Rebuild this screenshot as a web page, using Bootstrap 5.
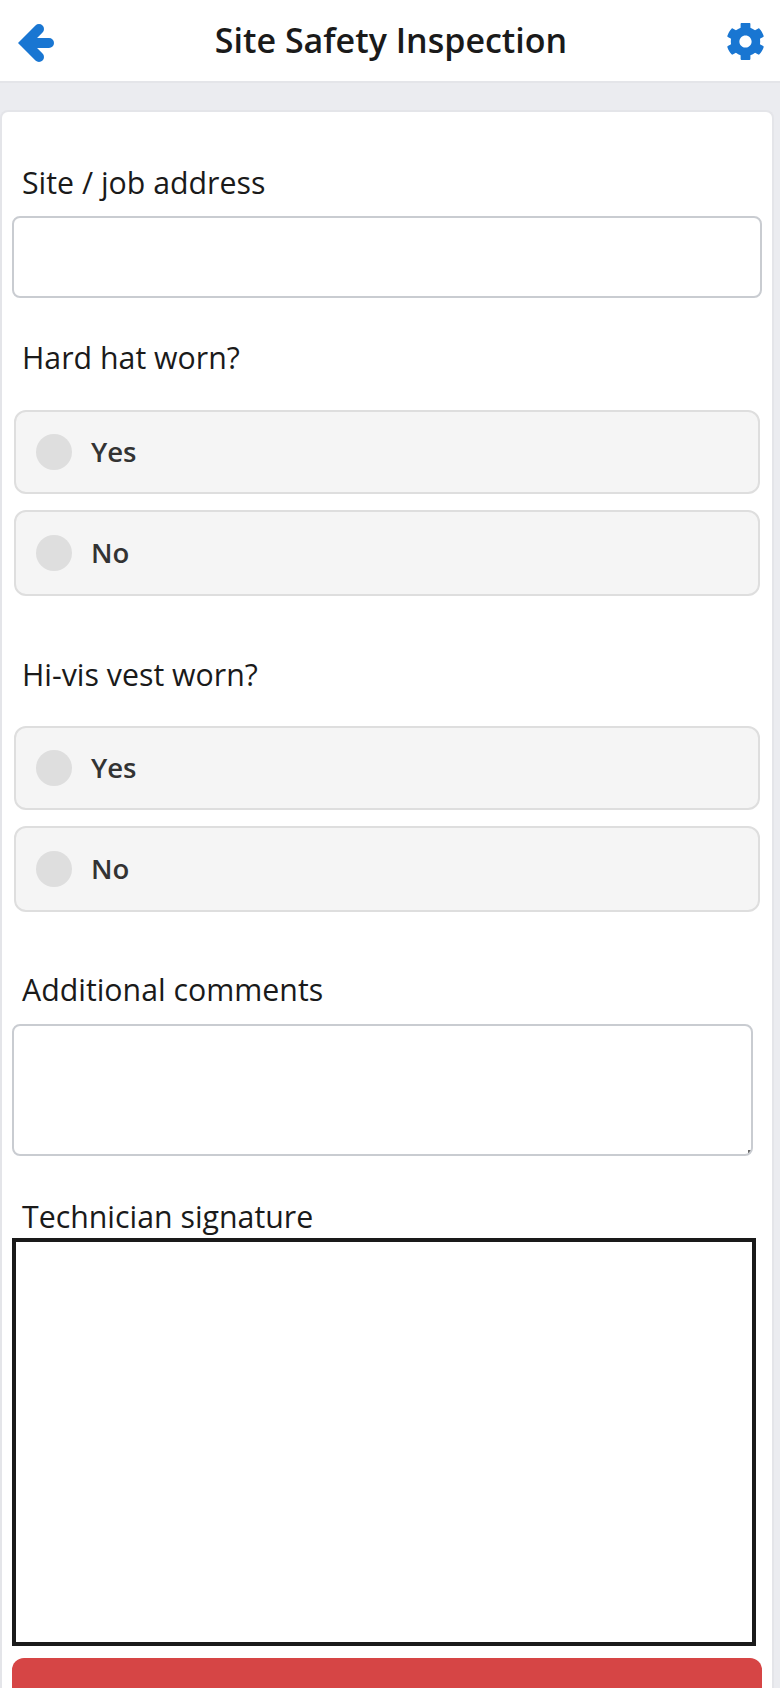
<!DOCTYPE html>
<html lang="en">
<head>
<meta charset="utf-8">
<title>Site Safety Inspection</title>
<link rel="stylesheet" href="https://cdn.jsdelivr.net/npm/bootstrap@5.3.0/dist/css/bootstrap.min.css">
<style>
html,body{height:1688px;overflow:hidden;}
body{background:#ebecf0;font-family:"Open Sans","Noto Sans",sans-serif;color:#1a1a1a;}
.app-head{height:83px;background:#fff;border-bottom:2px solid #e4e5e9;padding:0 16px 0 18px;}
.app-title{font-size:34px;font-weight:600;line-height:1.2;margin:0;color:#1a1a1a;}
.app-back{width:37px;height:38px;display:block;fill:none;stroke:#1976d2;stroke-width:10;stroke-linecap:round;stroke-linejoin:miter;margin-top:5px;}
.app-gear{width:37px;height:37px;display:block;fill:#1976d2;margin-top:1px;}
.sheet{margin:27px 6px 0 0;background:#fff;border:2px solid #e4e5e9;border-bottom:0;border-radius:8px 8px 0 0;padding:0 10px;height:1578px;overflow:hidden;}
.field-label{font-size:30.3px;line-height:40px;margin:0 0 0 10px;color:#1a1a1a;display:block;}
.site-input{width:750px;height:82px;border:2px solid #c9ccd1;border-radius:8px;}
.pick{width:746px;margin-left:2px;background:#f5f5f5;border:2px solid #dedede;border-radius:12px;padding:0 20px;font-size:27.5px;font-weight:600;color:#333;cursor:pointer;}
.pick input{appearance:none;width:36px;height:36px;border-radius:50%;background:#dedede;margin:0 19px 0 0;flex:none;}
.pick-y{height:84px;}
.pick-n{height:86px;}
.note-box{width:741px;height:132px;border:2px solid #c9ccd1;border-radius:8px;resize:none;background:linear-gradient(#666,#666) no-repeat right 0 bottom 1px/3px 3px #fff;}
.sign-pad{display:block;width:744px;height:408px;border:4px solid #1a1a1a;background:#fff;}
.send-btn{display:block;width:750px;height:30px;background:#d64545;border:0;border-radius:12px 12px 0 0;margin-top:12px;padding:0;}
.g1{padding-top:51px;}.g1 .field-label{margin-bottom:13px;}
.g2{margin-top:40px;}.g2 .field-label{margin-bottom:32px;}
.g3{margin-top:59px;}.g3 .field-label{margin-bottom:31px;}
.g4{margin-top:58px;}.g4 .field-label{margin-bottom:14px;}
.g5{margin-top:41px;}.g5 .field-label{margin-bottom:1px;}
</style>
</head>
<body>
<header class="app-head d-flex align-items-center justify-content-between">
  <svg class="app-back" viewBox="0 0 37 38" aria-label="Back"><path d="M21 5L7 19L21 33M7 19H31"/></svg>
  <h1 class="app-title">Site Safety Inspection</h1>
  <svg class="app-gear" viewBox="14 14 484 484" aria-label="Settings"><path d="M487.4 315.7l-42.6-24.6c4.3-23.2 4.3-47 0-70.2l42.6-24.6c4.9-2.8 7.1-8.6 5.5-14-11.1-35.6-30-67.8-54.7-94.6-3.8-4.1-10-5.1-14.8-2.3L380.8 110c-17.9-15.4-38.5-27.3-60.8-35.1V25.8c0-5.6-3.9-10.5-9.4-11.7-36.7-8.2-74.3-7.8-109.2 0-5.5 1.2-9.4 6.1-9.4 11.7V75c-22.2 7.9-42.8 19.8-60.8 35.1L88.7 85.5c-4.9-2.8-11-1.9-14.8 2.3-24.7 26.7-43.6 58.9-54.7 94.6-1.7 5.4.6 11.2 5.5 14L67.3 221c-4.3 23.2-4.3 47 0 70.2l-42.6 24.6c-4.9 2.8-7.1 8.6-5.5 14 11.1 35.6 30 67.8 54.7 94.6 3.8 4.1 10 5.1 14.8 2.3l42.6-24.6c17.9 15.4 38.5 27.3 60.8 35.1v49.2c0 5.6 3.9 10.5 9.4 11.7 36.7 8.2 74.3 7.8 109.2 0 5.5-1.2 9.4-6.1 9.4-11.7v-49.2c22.2-7.9 42.8-19.8 60.8-35.1l42.6 24.6c4.9 2.8 11 1.9 14.8-2.3 24.7-26.7 43.6-58.9 54.7-94.6 1.5-5.5-.7-11.3-5.6-14.1zM256 336c-44.1 0-80-35.9-80-80s35.9-80 80-80 80 35.9 80 80-35.9 80-80 80z"/></svg>
</header>
<main class="sheet card">
  <form>
    <div class="g1">
      <label class="field-label" for="addr">Site / job address</label>
      <input id="addr" class="form-control site-input" type="text">
    </div>
    <div class="g2">
      <div class="field-label">Hard hat worn?</div>
      <div class="d-flex flex-column gap-3">
        <label class="pick pick-y d-flex align-items-center"><input type="radio" name="hat">Yes</label>
        <label class="pick pick-n d-flex align-items-center"><input type="radio" name="hat">No</label>
      </div>
    </div>
    <div class="g3">
      <div class="field-label">Hi-vis vest worn?</div>
      <div class="d-flex flex-column gap-3">
        <label class="pick pick-y d-flex align-items-center"><input type="radio" name="vest">Yes</label>
        <label class="pick pick-n d-flex align-items-center"><input type="radio" name="vest">No</label>
      </div>
    </div>
    <div class="g4">
      <label class="field-label" for="notes">Additional comments</label>
      <textarea id="notes" class="form-control note-box"></textarea>
    </div>
    <div class="g5">
      <label class="field-label">Technician signature</label>
      <canvas class="sign-pad"></canvas>
    </div>
    <button type="button" class="btn send-btn" aria-label="Submit"></button>
  </form>
</main>
</body>
</html>
